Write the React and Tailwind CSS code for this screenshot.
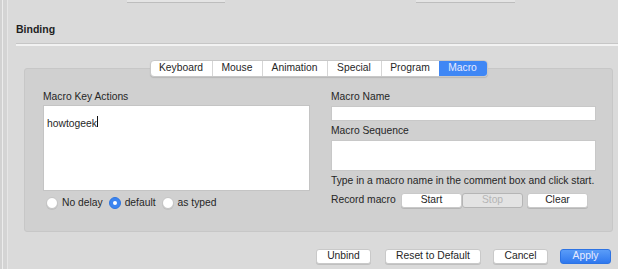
import React from "react";

function Btn({ children, className = "", disabled = false }) {
  return (
    <div
      className={
        "h-[15px] flex items-center justify-center rounded-[3px] text-[10.3px] leading-none " +
        (disabled
          ? "bg-[#e3e3e3] text-[#b5b5b5] border border-[#d6d6d6]"
          : "bg-white text-[#262626] border border-[#c9c9c9] shadow-[0_1px_0_rgba(0,0,0,0.12)] ") +
        className
      }
    >
      {children}
    </div>
  );
}

function Radio({ checked, label }) {
  return (
    <div className="flex items-center gap-[4px]">
      {checked ? (
        <div className="w-[12px] h-[12px] rounded-full bg-[#3b84f0] border border-[#2f76e0] flex items-center justify-center">
          <div className="w-[4px] h-[4px] rounded-full bg-white" />
        </div>
      ) : (
        <div className="w-[12px] h-[12px] rounded-full bg-white border border-[#c4c4c4] shadow-[0_1px_0_rgba(0,0,0,0.08)]" />
      )}
      <span className="text-[10.3px] leading-none text-[#262626]">{label}</span>
    </div>
  );
}

export default function App() {
  const tabs = [
    ["Keyboard", "w-[61px]"],
    ["Mouse", "w-[50px]"],
    ["Animation", "w-[65px]"],
    ["Special", "w-[54px]"],
    ["Program", "w-[58px]"],
  ];
  return (
    <div
      className="w-[618px] h-[269px] bg-[#dadada] flex overflow-hidden text-[#262626]"
      style={{ fontFamily: '"Liberation Sans", Arial, sans-serif' }}
    >
      {/* left window edge */}
      <div className="w-[8px] h-full flex">
        <div className="w-[2px] bg-[#d2d2d2]" />
        <div className="w-[1px] bg-[#ececec]" />
        <div className="w-[4px] bg-[#d4d4d4]" />
        <div className="w-[1px] bg-[#e6e6e6]" />
      </div>

      <div className="flex-1 flex flex-col">
        {/* top controls bottom edges */}
        <div className="flex h-[3px]">
          <div className="ml-[119px] w-[98px] bg-[#e4e4e4] border-b border-[#bdbdbd]" />
          <div className="ml-[191px] w-[99px] bg-[#e4e4e4] border-b border-[#bdbdbd]" />
        </div>

        {/* Binding header */}
        <div className="mt-[20px] ml-[8px] text-[10.5px] leading-[12px] font-bold text-[#1f1f1f]">
          Binding
        </div>
        <div className="mt-[8px] ml-[8px] border-t border-[#c6c6c6] border-b-2 border-b-[#f2f2f2]" />

        {/* panel */}
        <div className="mt-[22px] ml-[16px] w-[589px] h-[164px] bg-[#d0d0d0] border border-[#c7c7c7] rounded-[3px] flex flex-col">
          <div className="-mt-[9px] flex justify-center">
            <div className="flex h-[17px] rounded-[4px] bg-white border border-[#c8c8c8] shadow-[0_1px_1px_rgba(0,0,0,0.12)] overflow-hidden">
              {tabs.map(([t, w], i) => (
                <div
                  key={t}
                  className={
                    w +
                    " flex items-center justify-center text-[10.3px] leading-none text-[#262626] " +
                    (i > 0 ? "border-l border-[#d6d6d6]" : "")
                  }
                >
                  {t}
                </div>
              ))}
              <div className="w-[48px] flex items-center justify-center text-[10.3px] leading-none text-[#e6e9ff] bg-[#3f87f5]">
                Macro
              </div>
            </div>
          </div>

          <div className="flex mt-[14px] pl-[18px]">
            {/* left column */}
            <div className="w-[267px] flex flex-col">
              <div className="text-[10.3px] leading-[12px]">Macro Key Actions</div>
              <div className="mt-[2px] h-[86px] bg-white border border-[#c4c4c4] px-[3px] pt-[4px]">
                <span className="text-[10.3px] leading-[12px]">howtogeek</span>
                <span className="inline-block w-[1px] h-[11px] bg-[#111] align-middle -mt-[2px]" />
              </div>
              <div className="mt-[6px] ml-[3px] flex items-center gap-[6px]">
                <Radio label="No delay" />
                <Radio checked label="default" />
                <Radio label="as typed" />
              </div>
            </div>

            {/* right column */}
            <div className="ml-[21px] w-[265px] flex flex-col">
              <div className="text-[10.3px] leading-[12px]">Macro Name</div>
              <div className="mt-[3px] h-[15px] bg-white border border-[#c8c8c8]" />
              <div className="mt-[4px] text-[10.3px] leading-[12px]">Macro Sequence</div>
              <div className="mt-[3px] h-[31px] bg-white border border-[#c8c8c8]" />
              <div className="mt-[4px] text-[10.3px] leading-[12px] whitespace-nowrap">
                Type in a macro name in the comment box and click start.
              </div>
              <div className="mt-[6px] flex items-center">
                <div className="w-[70px] text-[10.3px] leading-none">Record macro</div>
                <Btn className="w-[61px]">Start</Btn>
                <Btn disabled className="ml-[4px] w-[61px]">Stop</Btn>
                <Btn className="ml-[4px] w-[61px]">Clear</Btn>
              </div>
            </div>
          </div>
        </div>

        {/* bottom buttons */}
        <div className="mt-[17px] flex justify-end pr-[7px]">
          <Btn className="w-[55px]">Unbind</Btn>
          <Btn className="ml-[14px] w-[96px]">Reset to Default</Btn>
          <Btn className="ml-[12px] w-[55px]">Cancel</Btn>
          <div className="ml-[12px] w-[51px] h-[15px] rounded-[3px] flex items-center justify-center text-[10.3px] leading-none text-[#e8ecff] bg-gradient-to-b from-[#5a9cf8] to-[#2f78ee] border border-[#2d73e3]">
            Apply
          </div>
        </div>
      </div>
    </div>
  );
}
